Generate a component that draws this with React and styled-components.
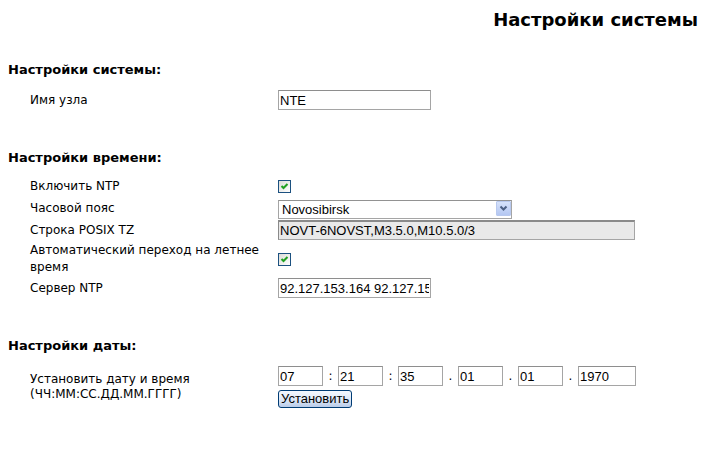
import React from "react";
import styled, { createGlobalStyle } from "styled-components";

const Global = createGlobalStyle`
  html, body { margin: 0; padding: 0; background: #fff; }
  body { font-family: "DejaVu Sans", Verdana, sans-serif; color: #000; }
`;

const Page = styled.div`
  width: 710px;
  padding: 10px 12px 0 8px;
  box-sizing: border-box;
`;

const Title = styled.h1`
  margin: 0 0 32px;
  text-align: right;
  font-size: 18px;
  line-height: 20px;
  font-weight: bold;
`;

const Section = styled.section`
  & + & { margin-top: 40px; }
`;

const Heading = styled.h2`
  margin: 0 0 ${(p) => p.$gap}px;
  font-size: 13px;
  line-height: 16px;
  font-weight: bold;
`;

const Grid = styled.div`
  display: grid;
  grid-template-columns: 248px 1fr;
  grid-auto-rows: minmax(20px, auto);
  row-gap: 2px;
  align-items: center;
  padding-left: 22px;
`;

const Label = styled.div`
  font-size: 12px;
  line-height: ${(p) => (p.$tight ? 15 : 17)}px;
  padding-right: 4px;
`;

const Cell = styled.div`
  display: flex;
  flex-direction: ${(p) => (p.$column ? "column" : "row")};
  align-items: ${(p) => (p.$column ? "flex-start" : "center")};
  gap: ${(p) => (p.$column ? 4 : 0)}px;
`;

const TextInput = styled.input`
  box-sizing: border-box;
  width: ${(p) => p.$w}px;
  height: 20px;
  margin: 0;
  padding: 0 1px;
  border: 1px solid #a5a5a5;
  border-top-color: #8e8e8e;
  font-family: "Liberation Sans", Arial, sans-serif;
  font-size: 13px;
  color: #000;
  background: ${(p) => (p.readOnly ? "#e9e9e9" : "#fff")};
  outline: none;
  ${(p) => p.readOnly && "border-top: 2px solid #8a8a8a; border-left-color: #8a8a8a;"}
`;

const SelectWrap = styled.div`
  position: relative;
  width: 234px;
  height: 19px;
`;

const Select = styled.select`
  appearance: none;
  -webkit-appearance: none;
  box-sizing: border-box;
  width: 100%;
  height: 100%;
  margin: 0;
  padding: 0 0 0 3px;
  border: 1px solid #a5a5a5;
  border-top-color: #929292;
  border-radius: 0;
  background: #fff;
  font-family: "Liberation Sans", Arial, sans-serif;
  font-size: 13px;
  color: #000;
  outline: none;
`;

const DropButton = styled.span`
  position: absolute;
  top: 2px;
  right: 1px;
  width: 15px;
  height: 15px;
  box-sizing: border-box;
  border: 1px solid #b8c9ef;
  border-radius: 1px;
  background: linear-gradient(#d6e2fb, #b4c7f2);
  display: flex;
  align-items: center;
  justify-content: center;
  pointer-events: none;
`;

const CheckBox = styled.span`
  display: inline-flex;
  align-items: center;
  justify-content: center;
  box-sizing: border-box;
  width: 13px;
  height: 13px;
  border: 1px solid #1c5180;
  background: linear-gradient(135deg, #dcdcd7, #ffffff);
`;

const Sep = styled.span`
  width: 15px;
  text-align: center;
  font-size: 12px;
  line-height: 17px;
`;

const Button = styled.button`
  box-sizing: border-box;
  height: 18px;
  margin: 0;
  padding: 0 2px;
  border: 1px solid #003c74;
  border-radius: 3px;
  background: linear-gradient(#f4f8fe 0%, #dde8f7 55%, #b9cbe8 100%);
  font-family: "Liberation Sans", Arial, sans-serif;
  font-size: 13px;
  line-height: 14px;
  color: #000;
`;

function Check() {
  return (
    <CheckBox>
      <svg width="9" height="9" viewBox="0 0 9 9">
        <path d="M1.5 4 L3.5 6 L7.5 2" fill="none" stroke="#21a121" strokeWidth="2" />
      </svg>
    </CheckBox>
  );
}

function Dropdown({ value }) {
  return (
    <SelectWrap>
      <Select defaultValue={value}>
        <option>{value}</option>
      </Select>
      <DropButton>
        <svg width="9" height="7" viewBox="0 0 9 7">
          <path d="M1.5 1.5 L4.5 4.5 L7.5 1.5" fill="none" stroke="#4d6185" strokeWidth="2" />
        </svg>
      </DropButton>
    </SelectWrap>
  );
}

const dateParts = [
  { v: "07", sep: ":" },
  { v: "21", sep: ":" },
  { v: "35", sep: "." },
  { v: "01", sep: "." },
  { v: "01", sep: "." },
  { v: "1970", w: 58 },
];

export default function App() {
  return (
    <>
      <Global />
      <Page>
        <Title>Настройки системы</Title>

        <Section>
          <Heading $gap={12}>Настройки системы:</Heading>
          <Grid>
            <Label>Имя узла</Label>
            <Cell>
              <TextInput $w={153} defaultValue="NTE" />
            </Cell>
          </Grid>
        </Section>

        <Section>
          <Heading $gap={10}>Настройки времени:</Heading>
          <Grid>
            <Label>Включить NTP</Label>
            <Cell><Check /></Cell>
            <Label>Часовой пояс</Label>
            <Cell><Dropdown value="Novosibirsk" /></Cell>
            <Label>Строка POSIX TZ</Label>
            <Cell>
              <TextInput $w={357} readOnly defaultValue="NOVT-6NOVST,M3.5.0,M10.5.0/3" />
            </Cell>
            <Label>Автоматический переход на летнее время</Label>
            <Cell><Check /></Cell>
            <Label>Сервер NTP</Label>
            <Cell>
              <TextInput $w={153} defaultValue="92.127.153.164 92.127.153.165" />
            </Cell>
          </Grid>
        </Section>

        <Section>
          <Heading $gap={12}>Настройки даты:</Heading>
          <Grid>
            <Label $tight>Установить дату и время (ЧЧ:ММ:СС.ДД.ММ.ГГГГ)</Label>
            <Cell $column>
              <Cell>
                {dateParts.map((p, i) => (
                  <React.Fragment key={i}>
                    <TextInput $w={p.w || 45} defaultValue={p.v} />
                    {p.sep && <Sep>{p.sep}</Sep>}
                  </React.Fragment>
                ))}
              </Cell>
              <Button>Установить</Button>
            </Cell>
          </Grid>
        </Section>
      </Page>
    </>
  );
}
